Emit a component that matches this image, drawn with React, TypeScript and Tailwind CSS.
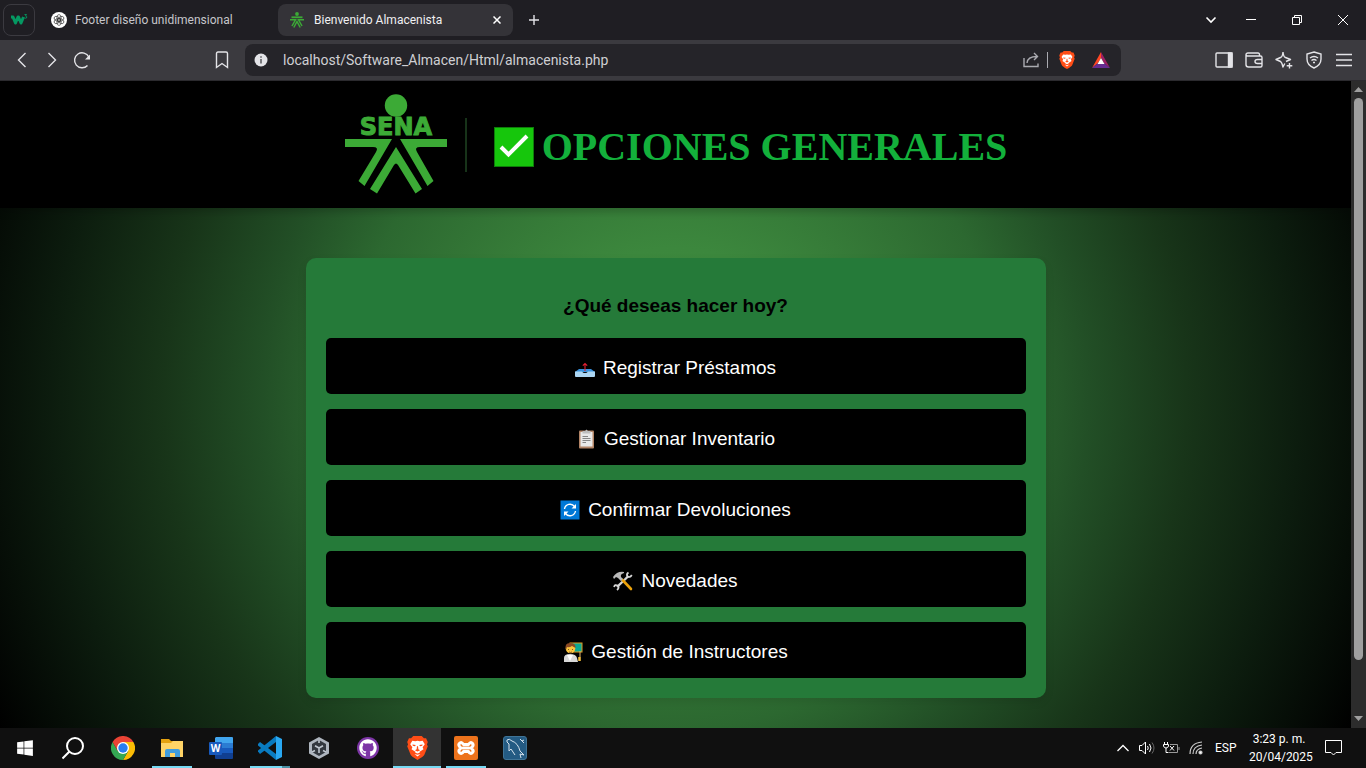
import React from "react";
import { FaWindows, FaGithub } from "react-icons/fa";

const ICON = "fill-none stroke-[#e4e4e8] stroke-[1.4]";

function NavButton({ label, className = "", children }: { label: string; className?: string; children: React.ReactNode }) {
  return (
    <button type="button" aria-label={label} className={`flex h-8 w-[30px] shrink-0 items-center justify-center ${className}`}>
      {children}
    </button>
  );
}

function Person({ className }: { className: string }) {
  return (
    <svg viewBox="0 0 16 16" className={className} fill="none" stroke="#3caa36" strokeWidth="1.500">
      <circle cx="8" cy="2" r="1.900" fill="#3caa36" stroke="none" />
      <path strokeWidth="1.800" d="M2.500 5.300H13.500" />
      <path d="M1 7.800H6.500L3 14M15 7.800H9.500L13 14M4.800 15.500L8 9.500L11.200 15.500" />
    </svg>
  );
}

function SenaLogo() {
  return (
    <svg viewBox="0 0 104 102" className="h-[102px] w-[104px] shrink-0" role="img" aria-label="SENA" fill="#3caa36">
      <circle cx="52" cy="11.500" r="11.200" />
      <text x="52" y="41" textAnchor="middle" stroke="#3caa36" strokeWidth="1" className="text-[24px] font-bold [font-family:'DejaVu_Sans',sans-serif]">SENA</text>
      <path d="M1 45H48L20.500 92L14.500 87L32 58Q35 53 29 53H1Z" />
      <path d="M56 45H103V53H76Q70 53 73 58L89.500 87L83.500 92Z" />
      <path d="M52 53L78 95L71.500 99.500L54 71Q52 68 50 71L33 99.500L26 95Z" />
    </svg>
  );
}

function BraveLion({ className }: { className: string }) {
  return (
    <svg viewBox="0 0 24 28" className={className}>
      <path fill="#ff4d16" d="M7 0H17L19.500 2.500L22 2.500L24 7L23 10L24 12L20 22Q19 24 12 28Q5 24 4 22L0 12L1 10L0 7L2 2.500L4.500 2.500Z" />
      <path fill="#fff" d="M6 5.500L9.500 6L12 5.500L14.500 6L18 5.500L20.500 9.500L18 13L19 15.500L14.500 18.500V19.500L12 20.500L9.500 19.500V18.500L5 15.500L6 13L3.500 9.500ZM8.500 21L12 22L15.500 21L12 24Z" />
      <path fill="#ff4d16" d="M6 10L10 10.500L9 12L6.500 11.500ZM18 10L14 10.500L15 12L17.500 11.500ZM11.400 12H12.600L13 15.500L15 16.500L12 18L9 16.500L11 15.500Z" />
    </svg>
  );
}

function TrayIcon() {
  return (
    <svg viewBox="0 0 20 20" className="h-5 w-5">
      <path fill="#3792df" d="M4 11H16L20 14H0Z" />
      <path fill="#acd6f2" d="M0 13.500H7Q8 15 10 15Q12 15 13 13.500H20V18Q20 19 19 19H1Q0 19 0 18Z" />
      <path fill="none" stroke="#e32032" strokeWidth="1.100" d="M10 13V5.500M7.800 7.700L10 5.500L12.200 7.700" />
    </svg>
  );
}

function ClipboardIcon() {
  return (
    <svg viewBox="0 0 20 20" className="h-5 w-5">
      <rect x="3" y="1.500" width="15" height="18" rx="1" fill="#b28466" />
      <path fill="#e8e8e8" d="M4.500 3H16.500V17.500H4.500Z" />
      <path fill="#bdbdbd" d="M6.500 2H9L10.500 .5L12 2H14.500V4.500H6.500Z" />
      <path stroke="#858585" d="M6.500 7.500H12M6.500 9.500H14.500M6.500 11.500H14.500M6.500 13.500H10" />
    </svg>
  );
}

function RefreshIcon() {
  return (
    <svg viewBox="0 0 20 20" className="h-5 w-5">
      <rect x=".5" y=".5" width="19" height="19" fill="#0078d7" />
      <path fill="none" stroke="#fff" strokeWidth="1.400" d="M4.500 9A5.600 5.600 0 0 1 14.500 6.500M15.500 11A5.600 5.600 0 0 1 5.500 13.500" />
      <path fill="#fff" d="M16 4V8.500H11.500ZM4 16V11.500H8.500Z" />
    </svg>
  );
}

function ToolsIcon() {
  return (
    <svg viewBox="0 0 20 20" className="h-5 w-5">
      <path stroke="#d6d6d6" strokeWidth="2.400" d="M4 16L15.500 5" />
      <path fill="none" stroke="#d6d6d6" strokeWidth="1.700" d="M15.500 1.500Q13 3 14.500 5.500Q17 7 18.800 4M1 16Q2 13 4.500 14.500Q7 16.500 4 19" />
      <path stroke="#eba20b" strokeWidth="2.600" strokeLinecap="round" d="M9.500 9L18 18" />
      <path fill="#b9b9b9" d="M1 8L0 6Q4 0 11 1V2Q7 3 8 6L10 8L8 10L5 7L3 6Z" />
    </svg>
  );
}

function TeacherIcon() {
  return (
    <svg viewBox="0 0 20 20" className="h-5 w-5">
      <rect x="6.500" y=".5" width="13" height="10" fill="#e19a20" />
      <rect x="7.500" y="1.500" width="11" height="8" fill="#0aa894" />
      <path fill="#d8d8d8" d="M1 20V16Q1 12 7 12Q13 12 14 16L15 20Z" />
      <path fill="#fff" d="M4 13L7 19L10 13Z" />
      <circle cx="7.500" cy="6.500" r="4.800" fill="#fbc43c" />
      <path fill="#8b4a24" d="M3 8Q1 1 7 1Q13 1 12.500 6L9 4Q6 6 4 5Z" />
      <path fill="none" stroke="#5e3925" strokeWidth=".800" d="M5.500 7V8M9.500 7V8M6 10Q7.500 11 9 10" />
      <path stroke="#fbc43c" strokeWidth="2.500" d="M16.500 15V19" />
      <path stroke="#e6b46c" d="M17 9V15" />
    </svg>
  );
}

function CheckIcon() {
  return (
    <svg viewBox="0 0 40 40" className="mt-1 ml-[27px] h-10 w-10 shrink-0" aria-hidden="true">
      <rect x=".5" y=".5" width="39" height="39" fill="#16c60c" stroke="#0e7d0a" />
      <path fill="none" stroke="#fff" strokeWidth="4" d="M7 20L14.500 27.500L33 9" />
    </svg>
  );
}

const OPTIONS = [
  { label: "Registrar Préstamos", icon: <TrayIcon /> },
  { label: "Gestionar Inventario", icon: <ClipboardIcon /> },
  { label: "Confirmar Devoluciones", icon: <RefreshIcon /> },
  { label: "Novedades", icon: <ToolsIcon /> },
  { label: "Gestión de Instructores", icon: <TeacherIcon /> },
];

function TabStrip() {
  return (
    <div className="flex h-10 shrink-0 items-center bg-[#1f1e23] text-xs text-[#c6c6ca]">
      <button type="button" aria-label="W3Schools" className="ml-[3px] flex h-8 w-8 shrink-0 items-center justify-center rounded-lg border border-[#3b3a40]">
        <svg viewBox="0 0 20 16" className="h-4 w-5">
          <path fill="none" stroke="#059862" strokeWidth="3" strokeLinejoin="round" d="M2 5H4L6.500 11L9 5H9.500L12 11L14.500 5" />
          <path fill="none" stroke="#059862" strokeWidth=".900" d="M15.500 2.500H17.500L16.500 4Q18.500 4.500 17.500 6Q16.500 6.500 15.500 6" />
        </svg>
      </button>
      <button type="button" className="ml-3 flex h-8 w-[231px] shrink-0 items-center gap-2 px-1 text-left">
        <svg viewBox="0 0 24 24" className="h-4 w-4 shrink-0">
          <circle cx="12" cy="12" r="12" fill="#fff" />
          <g fill="none" stroke="#303030" strokeWidth="1">
            <ellipse cx="12" cy="9" rx="3.200" ry="5.200" />
            <ellipse cx="12" cy="9" rx="3.200" ry="5.200" transform="rotate(60 12 12)" />
            <ellipse cx="12" cy="9" rx="3.200" ry="5.200" transform="rotate(120 12 12)" />
            <ellipse cx="12" cy="9" rx="3.200" ry="5.200" transform="rotate(180 12 12)" />
            <ellipse cx="12" cy="9" rx="3.200" ry="5.200" transform="rotate(240 12 12)" />
            <ellipse cx="12" cy="9" rx="3.200" ry="5.200" transform="rotate(300 12 12)" />
          </g>
        </svg>
        Footer diseño unidimensional
      </button>
      <div className="flex h-8 w-[235px] shrink-0 items-center rounded-lg bg-[#343338] pr-2 pl-[11px] text-[#f0f0f2]">
        <Person className="mr-[9px] h-4 w-4 shrink-0" />
        <span className="grow">Bienvenido Almacenista</span>
        <button type="button" aria-label="Cerrar pestaña" className="flex h-4 w-4 items-center justify-center">
          <svg viewBox="0 0 8 8" className="h-2 w-2 stroke-white stroke-[1.5]"><path d="M.5 .5L7.500 7.500M7.500 .5L.5 7.500" /></svg>
        </button>
      </div>
      <button type="button" aria-label="Nueva pestaña" className="ml-[11px] flex h-5 w-5 items-center justify-center">
        <svg viewBox="0 0 10 10" className="h-[10px] w-[10px] stroke-[#e4e4e8] stroke-[1.4]"><path d="M5 0V10M0 5H10" /></svg>
      </button>
      <div className="ml-auto flex h-full items-center">
        <button type="button" aria-label="Buscar pestañas" className="flex h-full w-[34px] items-center justify-center">
          <svg viewBox="0 0 12 8" className="h-2 w-3 fill-none stroke-white stroke-[1.6]"><path d="M1.500 1.500L6 6L10.500 1.500" /></svg>
        </button>
        <button type="button" aria-label="Minimizar" className="flex h-full w-[46px] items-center justify-center">
          <svg viewBox="0 0 10 10" className="h-[10px] w-[10px] stroke-white"><path d="M0 4.500H10" /></svg>
        </button>
        <button type="button" aria-label="Restaurar" className="flex h-full w-[46px] items-center justify-center">
          <svg viewBox="0 0 10 10" className="h-[10px] w-[10px] fill-none stroke-white"><path d="M.5 2.500H7.500V9.500H.5ZM2.500 2.500V.5H9.500V7.500H7.500" /></svg>
        </button>
        <button type="button" aria-label="Cerrar" className="flex h-full w-[46px] items-center justify-center">
          <svg viewBox="0 0 10 10" className="h-[10px] w-[10px] stroke-white"><path d="M0 0L10 10M10 0L0 10" /></svg>
        </button>
      </div>
    </div>
  );
}

function Toolbar() {
  return (
    <div className="flex h-[41px] shrink-0 items-center border-b border-[#2b2a2e] bg-[#3b3a3f] px-[7px]">
      <NavButton label="Atrás"><svg viewBox="0 0 10 16" className={`h-4 w-[10px] ${ICON}`}><path d="M8.500 1L1.500 8L8.500 15" /></svg></NavButton>
      <NavButton label="Adelante"><svg viewBox="0 0 10 16" className={`h-4 w-[10px] ${ICON}`}><path d="M1.500 1L8.500 8L1.500 15" /></svg></NavButton>
      <NavButton label="Recargar">
        <svg viewBox="0 0 18 18" className={`h-[18px] w-[18px] ${ICON}`}><path d="M14.500 14.500A7.500 7.500 0 1 1 15.800 6" /><path fill="#e4e4e8" stroke="none" d="M17 3.500V8.500H12Z" /></svg>
      </NavButton>
      <NavButton label="Guardar en favoritos" className="ml-[110px]">
        <svg viewBox="0 0 14 18" className={`h-[18px] w-[14px] ${ICON}`}><path d="M1.500 2.500Q1.500 1 3 1H11Q12.500 1 12.500 2.500V16.500L7 12.500L1.500 16.500Z" /></svg>
      </NavButton>
      <div className="ml-2 flex h-8 min-w-0 grow items-center rounded-lg bg-[#252429] pr-[11px] pl-[9px]">
        <svg viewBox="0 0 14 14" className="h-[14px] w-[14px] shrink-0"><circle cx="7" cy="7" r="6.500" fill="#e4e4e8" /><path stroke="#55555a" strokeWidth="1.500" d="M7 6V10.500M7 3.200V4.700" /></svg>
        <input aria-label="Dirección" className="ml-[15px] h-6 min-w-0 grow bg-transparent text-sm text-[#cfcfd3] outline-none" defaultValue="localhost/Software_Almacen/Html/almacenista.php" />
        <button type="button" aria-label="Compartir" className="mr-2">
          <svg viewBox="0 0 16 16" className="h-4 w-4 fill-none stroke-[#aaaab0] stroke-[1.4]"><path d="M1 6V14.500H15V11.500M4 11Q4.500 4.500 14 4.500M11 1L14.500 4.500L11 8" /></svg>
        </button>
        <span className="h-4 w-px bg-[#aaaab0]" />
        <button type="button" aria-label="Brave Shields" className="ml-[11px]"><BraveLion className="h-[18px] w-4" /></button>
        <button type="button" aria-label="Brave Rewards" className="ml-[17px]">
          <svg viewBox="0 0 18 16" className="h-4 w-[18px]"><path fill="#ff4724" d="M9 0L0 16L6 11L9 6Z" /><path fill="#9e1f63" d="M9 0L18 16L12 11L9 6Z" /><path fill="#662d91" d="M0 16H18L12 11H6Z" /><path fill="#fff" d="M9 6L12.500 12H5.500Z" /></svg>
        </button>
      </div>
      <NavButton label="Barra lateral" className="ml-[88px]"><svg viewBox="0 0 18 16" className={`h-4 w-[18px] ${ICON}`}><rect x="1" y="1" width="16" height="14" rx="1" /><path fill="#e4e4e8" d="M13.500 1H17V15H13.500Z" /></svg></NavButton>
      <NavButton label="Cartera"><svg viewBox="0 0 18 16" className={`h-4 w-[18px] ${ICON}`}><path d="M14.500 4V2.500Q14.500 1 13 1H3Q1 1 1 3V12.500Q1 15 3.500 15H15.500Q17 15 17 13.500V5.500Q17 4 15.500 4H3Q1 4 1 2.500M17 7.500H12.500Q10 7.500 10 9.500Q10 11.500 12.500 11.500H17" /></svg></NavButton>
      <NavButton label="Leo AI"><svg viewBox="0 0 18 18" className={`h-[18px] w-[18px] ${ICON}`}><path d="M8 1Q8.500 6 10.500 6.500L15.500 8.500L11 10.500M8 1Q7.500 6 5.500 6.500L1 8.500L5.500 10.500Q7 11.500 8 16L9.800 12.500M14.500 12V17.500M11.700 14.700H17.300" strokeLinejoin="round" /></svg></NavButton>
      <NavButton label="VPN"><svg viewBox="0 0 16 18" className={`h-[18px] w-4 ${ICON}`}><path d="M8 1L15 3V8Q15 14 8 17Q1 14 1 8V3ZM4 7Q8 4 12 7M5.500 9.500Q8 7.500 10.500 9.500M7 11.500H9" /></svg></NavButton>
      <NavButton label="Menú"><svg viewBox="0 0 16 14" className={`h-[14px] w-4 ${ICON}`}><path d="M0 1.500H16M0 7H16M0 12.500H16" /></svg></NavButton>
    </div>
  );
}

function PageContent() {
  return (
    <div className="flex min-w-0 grow flex-col overflow-hidden bg-[radial-gradient(circle_at_50%_49%,#409142_0%,#3c873d_20%,#2c6830_44%,#224f26_55%,#183519_68%,#0c1c0e_83%,#000000_100%)]">
      <header className="z-10 flex h-[127px] shrink-0 items-center justify-center bg-black shadow-[0_4px_8px_rgba(0,0,0,0.2)]">
        <SenaLogo />
        <span className="ml-[17px] h-[54px] w-0.5 bg-[#173319]" />
        <CheckIcon />
        <h1 className="mt-1 ml-2 text-[40px] leading-[48px] font-bold whitespace-nowrap text-[#13b03b] [font-family:'Liberation_Serif',serif]">OPCIONES GENERALES</h1>
      </header>
      <main className="mx-auto mt-[50px] w-full max-w-[740px] rounded-[10px] bg-[#257a39] p-5 shadow-[0_4px_8px_rgba(0,0,0,0.1)] [font-family:'Liberation_Sans',Arial,sans-serif]">
        <h2 className="mt-4 mb-5 text-center text-[19px] leading-6 font-bold text-black">¿Qué deseas hacer hoy?</h2>
        <nav className="flex flex-col gap-[15px]">
          {OPTIONS.map(({ label, icon }) => (
            <a key={label} href="#" className="flex h-14 items-center justify-center gap-2 rounded-[5px] bg-black pt-[3px] text-[19px] leading-6 text-white">
              {icon}
              {label}
            </a>
          ))}
        </nav>
      </main>
    </div>
  );
}

function ScrollBar() {
  return (
    <div className="flex w-[15px] shrink-0 flex-col items-center bg-[#2c2c2c]" aria-hidden="true">
      <svg viewBox="0 0 9 5" className="my-[6px] h-[5px] w-[9px] shrink-0 fill-[#9f9f9f]"><path d="M0 5L4.500 0L9 5Z" /></svg>
      <div className="h-[562px] w-[9px] rounded-full bg-[#9f9f9f]" />
      <svg viewBox="0 0 9 5" className="mt-auto mb-[7px] h-[5px] w-[9px] shrink-0 fill-[#9f9f9f]"><path d="M0 0L4.500 5L9 0Z" /></svg>
    </div>
  );
}

const APPS: { name: string; state: string; icon: React.ReactNode }[] = [
  { name: "Inicio", state: "", icon: <FaWindows className="h-[18px] w-[18px] text-white" /> },
  { name: "Buscar", state: "", icon: <svg viewBox="0 0 24 24" className="h-6 w-6 fill-none stroke-white stroke-2"><circle cx="13" cy="10" r="8" /><path d="M7.500 15.500L.5 22.500" /></svg> },
  { name: "Chrome", state: "", icon: <svg viewBox="0 0 24 24" className="h-6 w-6"><path fill="#ea4335" d="M1.600 6A12 12 0 0 1 22.400 6H12V12Z" /><path fill="#fbbc05" d="M22.400 6A12 12 0 0 1 12 24L17.200 15L12 6Z" /><path fill="#34a853" d="M12 24A12 12 0 0 1 1.600 6L6.800 15L17.200 15Z" /><path fill="#ea4335" d="M1.600 6L6.800 15L12 12V6Z" /><circle cx="12" cy="12" r="6" fill="#fff" /><circle cx="12" cy="12" r="4.700" fill="#287df0" /></svg> },
  { name: "Explorador de archivos", state: "running", icon: <svg viewBox="0 0 24 24" className="h-6 w-6"><path fill="#e5a210" d="M1 3H9L11 5H23V10H1Z" /><path fill="#ffd466" d="M1 7H11L13 5H23V21H1Z" /><path fill="#419ddd" d="M5 21V15Q5 13 7 13H18Q20 13 20 15V21H15V17H10V21Z" /></svg> },
  { name: "Word", state: "", icon: <svg viewBox="0 0 24 24" className="h-6 w-6"><path fill="#41a5ee" d="M7 1H23Q24 1 24 2V7H6V2Z" /><path fill="#2b7cd3" d="M6 7H24V12H6Z" /><path fill="#185abd" d="M6 12H24V17H6Z" /><path fill="#103f91" d="M6 17H24V22Q24 23 23 23H7Q6 23 6 22Z" /><rect y="6" width="13" height="13" rx="1" fill="#185abd" /><text x="6.500" y="16" textAnchor="middle" fill="#fff" className="text-[10px] font-bold [font-family:'Open_Sans',sans-serif]">W</text></svg> },
  { name: "Visual Studio Code", state: "multi", icon: <svg viewBox="0 0 24 24" className="h-6 w-6"><path fill="#0b7dc2" d="M0 8L2 6L18 18V24L0 9.500Z" /><path fill="#087ac0" d="M0 15.500L2 18L18 6V0L0 14.500Z" /><path fill="#29a8f2" d="M18 0L24 3V21L18 24Z" /></svg> },
  { name: "Unity Hub", state: "", icon: <svg viewBox="0 0 24 24" className="h-6 w-6"><path fill="#aeb5be" d="M12 1L22 6.500V17.500L12 23L2 17.500V6.500Z" /><path fill="#33383f" d="M12 4L19 8V16L12 20L5 16V8Z" /><path fill="none" stroke="#bfc6cf" strokeWidth="1.600" d="M12 12V17M12 12L8 9.700M12 12L16 9.700M12 4V7M5 16L8 14.500M19 16L16 14.500" /></svg> },
  { name: "GitHub Desktop", state: "", icon: <span className="flex h-[22px] w-[22px] items-center justify-center rounded-full bg-[#7d35a6]"><FaGithub className="h-[18px] w-[18px] text-white" /></span> },
  { name: "Brave", state: "active", icon: <BraveLion className="h-6 w-[21px]" /> },
  { name: "XAMPP", state: "running", icon: <svg viewBox="0 0 24 24" className="h-6 w-6"><rect width="24" height="24" rx="2" fill="#ed731c" /><path fill="none" stroke="#fff" strokeWidth="3" strokeLinejoin="round" strokeLinecap="round" d="M9 12H15M9.500 8.500Q8 5.800 6 7Q4 8.500 5.500 10.500L7 12L5.500 13.500Q4 15.500 6 17Q8 18.200 9.500 15.500H14.500Q16 18.200 18 17Q20 15.500 18.500 13.500L17 12L18.500 10.500Q20 8.500 18 7Q16 5.800 14.500 8.500Z" /></svg> },
  { name: "MySQL Workbench", state: "", icon: <svg viewBox="0 0 24 24" className="h-6 w-6"><rect x=".5" y=".5" width="23" height="23" rx="2.500" fill="#245b83" stroke="#3f7497" /><path fill="none" stroke="#d6e3ed" strokeWidth="1" d="M4 4Q6 2 9 5Q15 7 17 15L21 19L17 18L18 22M4 4Q3 6 6 8L6 15L8 13L12 19M17 3L19 5L21 4M19 5L21 7" /></svg> },
];

function Taskbar() {
  return (
    <footer className="flex h-10 shrink-0 items-center bg-[#101010] pl-px text-xs text-white">
      {APPS.map(({ name, state, icon }) => (
        <button key={name} type="button" aria-label={name} className={`mr-px flex h-full w-12 shrink-0 flex-col items-center ${state === "active" ? "bg-[#333333]" : ""}`}>
          <span className="flex h-[38px] items-center pt-0.5">{icon}</span>
          {state && <span className={`h-0.5 ${state === "active" ? "w-12" : "w-10"} ${state === "multi" ? "bg-[linear-gradient(90deg,#76d9f3_80%,#4a8fa2_80%)]" : "bg-[#76d9f3]"}`} />}
        </button>
      ))}
      <div className="ml-auto flex h-full items-center">
        <svg viewBox="0 0 12 8" className="h-2 w-3 fill-none stroke-white stroke-[1.3]"><path d="M.5 7L6 1.500L11.500 7" /></svg>
        <svg viewBox="0 0 17 14" className="ml-[10px] h-[14px] w-[17px] fill-none stroke-white"><path d="M.5 4.500H3L6.500 1V13L3 9.500H.5ZM8.500 5Q10 7 8.500 9M10.500 3Q13.500 7 10.500 11" /><path stroke="#666" d="M13 1.500Q17 7 13 12.500" /></svg>
        <svg viewBox="0 0 17 14" className="ml-[7px] h-[14px] w-[17px] fill-none stroke-white"><path d="M1.500 1V3M4.500 1V3M.5 3.500H5.500V5Q5 7 3 7Q1 7 .5 5ZM3 7V11.500H5.500M7 5L11 9.500M11 5L7 9.500" /><path stroke="#999" d="M7 3.500H14.500V11.500H6M16 6V9" /></svg>
        <svg viewBox="0 0 14 14" className="ml-[9px] h-[14px] w-[14px] fill-none stroke-[#cccccc] stroke-[1.2]"><path d="M1 13Q1 2 13 1M4 13Q4 5 13 4M7 13Q7 8 13 7" /><circle cx="11.500" cy="11.500" r="1.500" fill="#fff" /></svg>
        <span className="ml-3 w-5 whitespace-nowrap">ESP</span>
        <time className="ml-[14px] flex w-[60px] flex-col text-center leading-[18px] whitespace-nowrap"><span>3:23 p. m.</span><span>20/04/2025</span></time>
        <button type="button" aria-label="Notificaciones" className="mr-6 ml-4"><svg viewBox="0 0 17 16" className="h-4 w-[17px] fill-none stroke-white"><path d="M.5 .5H16.500V12.500H11L8.500 15L6 12.500H.5Z" /></svg></button>
      </div>
    </footer>
  );
}

export default function App() {
  return (
    <div className="flex h-screen flex-col overflow-hidden bg-[#101010] [font-family:Roboto,'Open_Sans',sans-serif]">
      <TabStrip />
      <Toolbar />
      <div className="flex min-h-0 grow">
        <PageContent />
        <ScrollBar />
      </div>
      <Taskbar />
    </div>
  );
}
